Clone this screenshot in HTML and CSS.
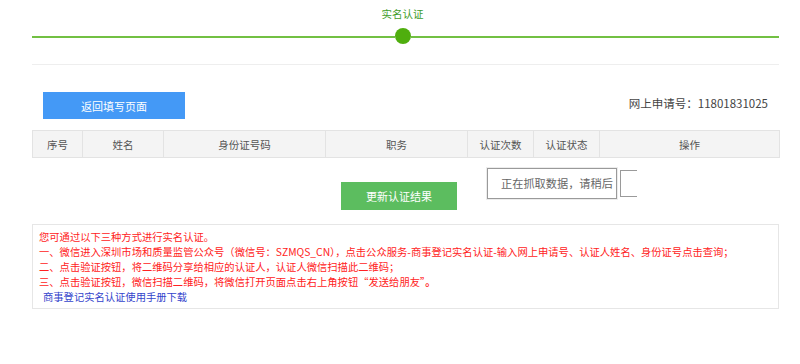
FILE: index.html
```html
<!DOCTYPE html>
<html lang="zh-CN">
<head>
<meta charset="utf-8">
<title>实名认证</title>
<link rel="stylesheet" href="styles.css">
</head>
<body>
<div class="page">
  <div class="step-title">实名认证</div>
  <div class="progress">
    <div class="seg seg-left"></div>
    <div class="dot"></div>
    <div class="seg seg-right"></div>
  </div>
  <div class="sep"></div>

  <div class="toolbar">
    <button class="btn btn-blue">返回填写页面</button>
    <div class="apply-no">网上申请号：11801831025</div>
  </div>

  <table class="grid">
    <thead>
      <tr>
        <th class="c1">序号</th>
        <th class="c2">姓名</th>
        <th class="c3">身份证号码</th>
        <th class="c4">职务</th>
        <th class="c5">认证次数</th>
        <th class="c6">认证状态</th>
        <th class="c7">操作</th>
      </tr>
    </thead>
  </table>

  <div class="actions">
    <button class="btn btn-green">更新认证结果</button>
    <div class="loading">正在抓取数据，请稍后</div>
    <div class="loading-2"></div>
  </div>

  <div class="notice">
    <p>您可通过以下三种方式进行实名认证。</p>
    <p>一、微信进入深圳市场和质量监管公众号（微信号：SZMQS_CN），点击公众服务-商事登记实名认证-输入网上申请号、认证人姓名、身份证号点击查询；</p>
    <p>二、点击验证按钮，将二维码分享给相应的认证人，认证人微信扫描此二维码；</p>
    <p>三、点击验证按钮，微信扫描二维码，将微信打开页面点击右上角按钮“发送给朋友”<b>。</b></p>
    <p class="link-line"><a class="link" href="#">商事登记实名认证使用手册下载</a></p>
  </div>
</div>
</body>
</html>
```
FILE: styles.css
```css
* { box-sizing: border-box; }
html, body { margin: 0; padding: 0; background: #fff; }
body {
  font-family: "Noto Sans CJK SC", "Microsoft YaHei", sans-serif;
  color: #333;
}
.page {
  width: 747px;
  margin-left: 32px;
}
.step-title {
  height: 28px;
  line-height: 28px;
  text-align: center;
  font-size: 10.5px;
  color: #3f9d2b;
  padding-right: 6px;
}
.progress {
  display: flex;
  align-items: center;
  height: 16px;
}
.seg {
  height: 2px;
  background: #72c043;
  margin-top: 2px;
}
.seg-left { width: 363px; }
.seg-right { flex: 1; }
.dot {
  width: 16px;
  height: 16px;
  border-radius: 50%;
  background: #4fae0e;
}
.sep {
  margin-top: 20px;
  border-top: 1px solid #eeeeee;
}
.toolbar {
  display: flex;
  justify-content: space-between;
  align-items: flex-start;
  margin-top: 27px;
}
.btn {
  border: 0;
  font-family: inherit;
  color: #fff;
  font-size: 11px;
  cursor: pointer;
  padding: 0;
}
.btn-blue {
  margin-left: 11px;
  width: 142px;
  height: 27px;
  background: #4499f6;
}
.apply-no {
  font-size: 11.5px;
  color: #444;
  margin-top: 3px;
  padding-right: 11px;
  line-height: 16px;
}
.grid {
  margin-top: 11px;
  width: 747px;
  border-collapse: collapse;
  table-layout: fixed;
}
.grid th {
  height: 27px;
  background: #f4f4f4;
  border: 1px solid #e3e3e3;
  font-weight: normal;
  font-size: 10.5px;
  color: #555;
  padding: 0;
}
.c1 { width: 50px; }
.c2 { width: 81px; }
.c3 { width: 162px; }
.c4 { width: 142px; }
.c5 { width: 66px; }
.c6 { width: 66px; }
.c7 { width: 180px; }
.actions {
  display: flex;
  align-items: flex-start;
  margin-top: 10px;
  height: 42px;
}
.btn-green {
  margin-left: 309px;
  margin-top: 14px;
  width: 116px;
  height: 28px;
  background: #5cbd5f;
}
.loading {
  margin-left: 30px;
  width: 130px;
  height: 31px;
  border: 1px solid #9a9a9a;
  box-shadow: 0 0 0 1px #ececec;
  font-size: 11.2px;
  color: #666;
  line-height: 29px;
  padding-left: 13px;
  white-space: nowrap;
}
.loading-2 {
  margin-left: 3px;
  margin-top: 2px;
  width: 17px;
  height: 27px;
  border: 1px solid #9a9a9a;
  border-right: 0;
}
.notice {
  margin-top: 14px;
  border: 1px solid #e6e6e6;
  padding: 4px 6px 4px 6px;
  font-size: 10.3px;
  line-height: 15px;
  color: #f22;
}
.notice p { margin: 0; white-space: nowrap; }
.notice b { font-weight: bold; }
.link-line { padding-left: 4px; }
.link {
  color: #3344cc;
  text-decoration: none;
}
```
